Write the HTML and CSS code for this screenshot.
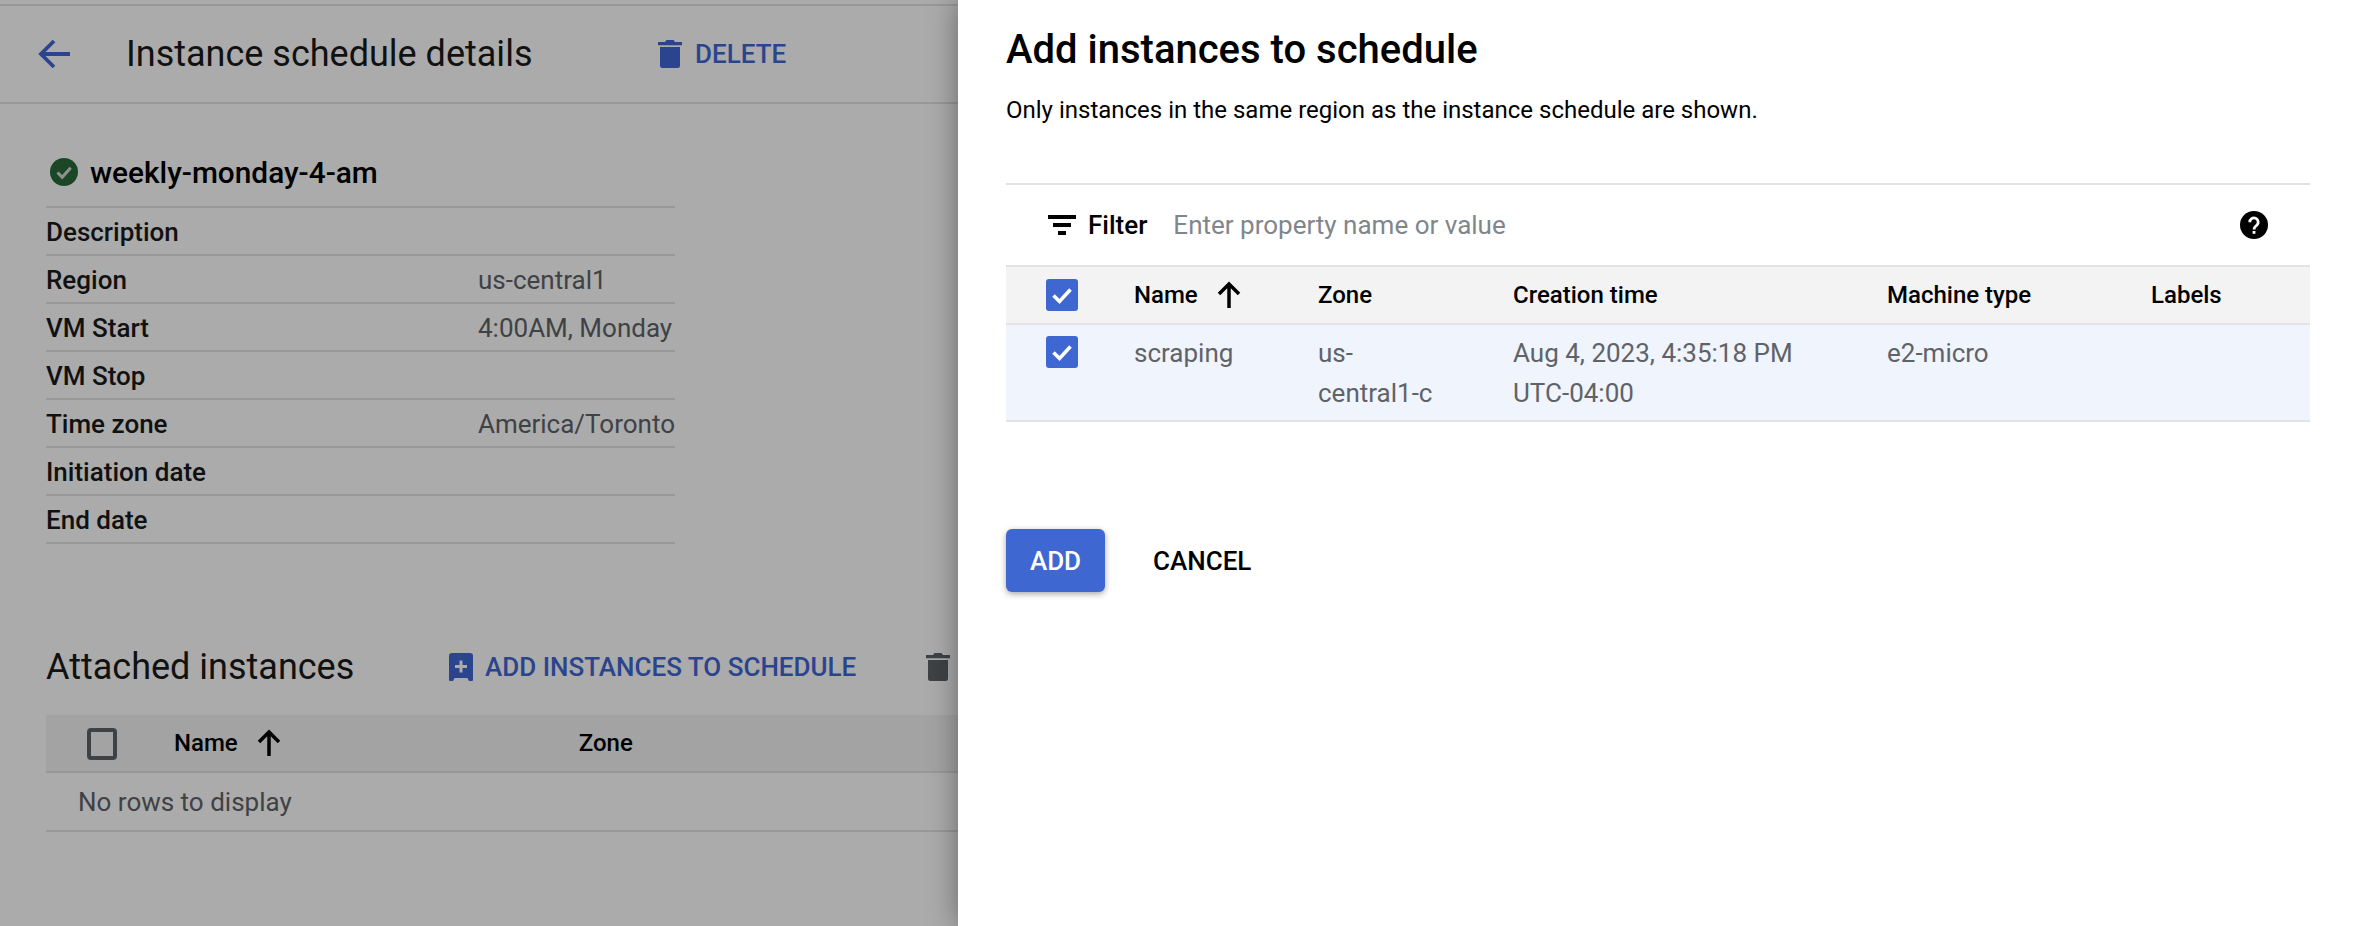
FILE: index.html
```html
<!DOCTYPE html>
<html lang="en">
<head>
<meta charset="utf-8">
<title>Instance schedule details</title>
<link rel="stylesheet" href="styles.css">
</head>
<body>
<div class="app">
  <main class="page">
    <div class="topbar"></div>
    <header class="page-head">
      <svg class="back" viewBox="0 0 32 32"><path d="M32 16H3.500M16 3 3 16l13 13" fill="none" stroke="currentColor" stroke-width="3.800"/></svg>
      <h1 class="page-title">Instance schedule details</h1>
      <button class="text-btn del">
        <svg class="trash" viewBox="0 0 24 28"><path d="M8.500 0h7L17 2h7v3.200H0V2h7zM2 7h20v18.500a2.500 2.500 0 0 1-2.500 2.500h-15A2.500 2.500 0 0 1 2 25.500z" fill="currentColor"/></svg>
        DELETE
      </button>
    </header>
    <section class="details">
      <div class="name-row">
        <svg class="ok" viewBox="0 0 28 28"><circle cx="14" cy="14" r="14" fill="#2a6a3a"/><path d="m7.500 14.500 4.700 4.700 8.500-9.400" fill="none" stroke="#d8d8d8" stroke-width="3"/></svg>
        <span>weekly-monday-4-am</span>
      </div>
      <div class="row"><span class="k">Description</span><span class="v"></span></div>
      <div class="row"><span class="k">Region</span><span class="v">us-central1</span></div>
      <div class="row"><span class="k">VM Start</span><span class="v">4:00AM, Monday</span></div>
      <div class="row"><span class="k">VM Stop</span><span class="v"></span></div>
      <div class="row"><span class="k">Time zone</span><span class="v">America/Toronto</span></div>
      <div class="row"><span class="k">Initiation date</span><span class="v"></span></div>
      <div class="row"><span class="k">End date</span><span class="v"></span></div>
    </section>
    <section class="attached">
      <div class="attached-head">
        <h2 class="sub-title">Attached instances</h2>
        <button class="text-btn add-link">
          <svg class="bookmark" viewBox="0 0 24 28"><path fill-rule="evenodd" d="M3 0h18a3 3 0 0 1 3 3v24a1 1 0 0 1-1 1h-2.500a1 1 0 0 1-1-1l-1-2H5.500l-1 2a1 1 0 0 1-1 1H1a1 1 0 0 1-1-1V3a3 3 0 0 1 3-3zM10.500 7.500V12H6v3h4.500v4.500h3V15H18v-3h-4.500V7.500z" fill="currentColor"/></svg>
          ADD INSTANCES TO SCHEDULE
        </button>
        <svg class="trash grey" viewBox="0 0 24 28"><path d="M8.500 0h7L17 2h7v3.200H0V2h7zM2 7h20v18.500a2.500 2.500 0 0 1-2.500 2.500h-15A2.500 2.500 0 0 1 2 25.500z" fill="currentColor"/></svg>
      </div>
      <div class="lt-head">
        <span class="cb-empty"></span>
        <span class="lt-name">Name</span>
        <svg class="sort" viewBox="0 0 24 28"><path d="M12 27V3M2 13 12 3l10 10" fill="none" stroke="currentColor" stroke-width="3.500"/></svg>
        <span class="lt-zone">Zone</span>
      </div>
      <div class="lt-empty">No rows to display</div>
    </section>
    <div class="scrim"></div>
  </main>
  <aside class="panel">
    <h2 class="panel-title">Add instances to schedule</h2>
    <p class="panel-sub">Only instances in the same region as the instance schedule are shown.</p>
    <div class="filter">
      <svg class="filter-ic" viewBox="0 0 28 20"><path d="M0 0h28v4H0zM5 8h18v4H5zM10 16h8v4h-8z" fill="currentColor"/></svg>
      <span class="filter-label">Filter</span>
      <span class="filter-ph">Enter property name or value</span>
      <svg class="help" viewBox="0 0 28 28"><circle cx="14" cy="14" r="14" fill="#000"/><path d="M9.800 11.200a4.200 4.200 0 1 1 7 3c-1.600 1.400-2.800 2-2.800 4.300" fill="none" stroke="#fff" stroke-width="2.800"/><rect x="12.600" y="20" width="2.800" height="2.800" fill="#fff"/></svg>
    </div>
    <div class="grid head">
      <span class="cell cb-cell"><svg class="cb" viewBox="0 0 32 32"><rect width="32" height="32" rx="3" fill="#3f67d2"/><path d="m7.500 16.500 6 6 11-12" fill="none" stroke="#fff" stroke-width="3.600"/></svg></span>
      <span class="cell name-h">Name<svg class="sort" viewBox="0 0 24 28"><path d="M12 27V3M2 13 12 3l10 10" fill="none" stroke="currentColor" stroke-width="3.500"/></svg></span>
      <span class="cell">Zone</span>
      <span class="cell">Creation time</span>
      <span class="cell">Machine type</span>
      <span class="cell">Labels</span>
    </div>
    <div class="grid body">
      <span class="cell cb-cell"><svg class="cb" viewBox="0 0 32 32"><rect width="32" height="32" rx="3" fill="#3f67d2"/><path d="m7.500 16.500 6 6 11-12" fill="none" stroke="#fff" stroke-width="3.600"/></svg></span>
      <span class="cell">scraping</span>
      <span class="cell">us-<br>central1-c</span>
      <span class="cell">Aug 4, 2023, 4:35:18 PM<br>UTC-04:00</span>
      <span class="cell">e2-micro</span>
      <span class="cell"></span>
    </div>
    <div class="actions">
      <button class="btn-add">ADD</button>
      <button class="btn-cancel">CANCEL</button>
    </div>
  </aside>
</div>
</body>
</html>
```
FILE: styles.css
```css
* { box-sizing: border-box; }
html, body { margin: 0; height: 100%; }
body { font-family: Roboto, "Liberation Sans", sans-serif; background: #fff; overflow: hidden; color: #000; }
h1, h2, p { margin: 0; font-weight: 400; }
button { font: inherit; background: none; border: 0; padding: 0; cursor: pointer; }
.app { display: flex; width: 2354px; height: 926px; }

.page { position: relative; width: 958px; flex: none; height: 926px; overflow: hidden; background: #fff; }
.scrim { position: absolute; inset: 0; background: rgba(0,0,0,.33); }

.topbar { height: 6px; border-bottom: 2px solid #e3e3e3; }
.page-head { height: 98px; display: flex; align-items: center; border-bottom: 2px solid #e3e3e3; padding-left: 38px; }
.back { width: 32px; height: 32px; color: #3f67d2; flex: none; }
.page-title { font-size: 36px; margin-left: 56px; width: 532px; color: #1a1a1a; }
.text-btn { display: inline-flex; align-items: center; font-weight: 500; font-size: 26px; color: #3f67d2; }
.del { gap: 13px; }
.trash { width: 24px; height: 28px; flex: none; }
.trash.grey { color: #5f6368; margin-left: 70px; }

.details { width: 629px; margin-left: 46px; padding-top: 36px; }
.name-row { height: 68px; display: flex; align-items: center; gap: 12px; padding: 0 0 2px 4px; font-size: 29.800px; font-weight: 500; border-bottom: 2px solid #e3e3e3; }
.ok { width: 28px; height: 28px; flex: none; }
.row { height: 48px; display: flex; align-items: center; border-bottom: 2px solid #e3e3e3; font-size: 26px; padding-top: 2px; }
.k { width: 432px; font-weight: 500; color: #1a1a1a; }
.v { color: #5f6368; white-space: nowrap; }

.attached { margin-left: 46px; padding-top: 95px; width: 1000px; }
.attached-head { display: flex; align-items: center; height: 56px; }
.sub-title { font-size: 36px; width: 403px; color: #1a1a1a; }
.add-link { gap: 12px; }
.bookmark { width: 24px; height: 28px; flex: none; }
.lt-head { margin-top: 20px; height: 58px; background: #f3f3f3; display: flex; align-items: center; border-bottom: 2px solid #e3e3e3; padding-left: 41px; font-size: 24px; font-weight: 500; }
.cb-empty { width: 30px; height: 32px; border: 4px solid #5f6368; border-radius: 4px; flex: none; margin-top: 2px; }
.lt-name { margin-left: 57px; }
.lt-head .sort { margin-left: 19px; }
.lt-zone { margin-left: 298px; }
.sort { width: 24px; height: 28px; flex: none; color: #000; }
.lt-empty { height: 59px; border-bottom: 2px solid #e3e3e3; display: flex; align-items: center; padding-left: 32px; font-size: 26px; color: #5f6368; }

.panel { position: relative; flex: 1; padding: 0 44px 0 48px; background: #fff; box-shadow: 0 0 28px rgba(0,0,0,.4); }
.panel-title { font-size: 40px; font-weight: 500; line-height: 46px; padding-top: 27px; height: 73px; }
.panel-sub { font-size: 24px; line-height: 32px; margin-top: 21px; }

.filter { margin-top: 57px; height: 82px; border-top: 2px solid #e3e3e3; display: flex; align-items: center; padding-left: 42px; padding-right: 42px; font-size: 26px; }
.filter-ic { width: 28px; height: 20px; flex: none; }
.filter-label { font-weight: 500; margin-left: 12px; }
.filter-ph { margin-left: 26px; color: #80868b; flex: 1; }
.help { width: 28px; height: 28px; flex: none; }

.grid { display: grid; grid-template-columns: 128px 184px 195px 374px 264px 1fr; border-top: 2px solid #e3e3e3; }
.head { height: 58px; background: #f3f3f3; font-weight: 500; font-size: 24px; align-items: center; }
.body { height: 99px; background: #f0f4fd; border-bottom: 2px solid #e3e3e3; font-size: 26px; line-height: 40px; color: #5f6368; padding-top: 8px; }
.cell { display: block; }
.cb-cell { padding-left: 40px; }
.cb { display: block; width: 32px; height: 32px; }
.body .cb-cell { padding-top: 3px; }
.name-h { display: flex; align-items: center; gap: 19px; }

.actions { margin-top: 107px; display: flex; align-items: center; gap: 48px; }
.btn-add { width: 99px; height: 63px; background: #3f67d2; color: #fff; font-weight: 500; font-size: 26px; border-radius: 6px; box-shadow: 0 2px 6px rgba(0,0,0,.35); }
.btn-cancel { font-weight: 500; font-size: 26px; color: #000; }
```
